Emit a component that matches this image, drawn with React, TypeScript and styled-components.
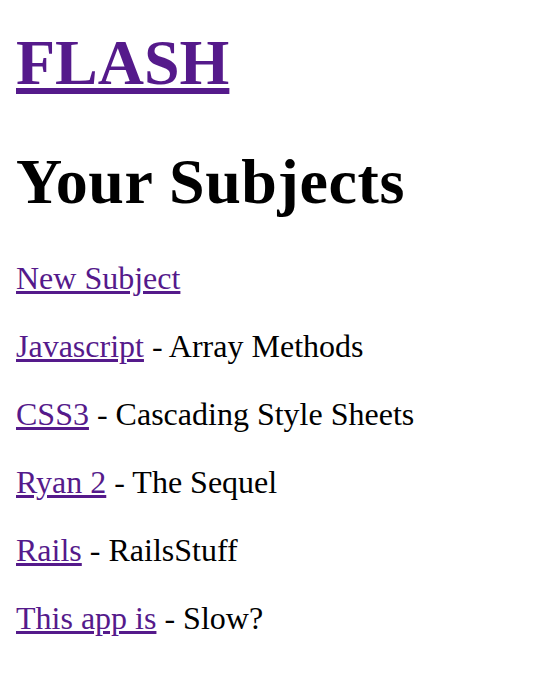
import React from "react";
import styled, { createGlobalStyle } from "styled-components";

const Global = createGlobalStyle`
  html, body { margin: 0; padding: 0; background: #fff; }
  body { font-family: "Liberation Serif", "Times New Roman", serif; color: #000; }
`;

const Page = styled.div`
  padding: 28px 16px 16px;
  font-size: 32px;
  line-height: 36px;
`;

const Brand = styled.h1`
  margin: 0;
  font-size: 64px;
  font-weight: bold;
  line-height: 1.107;
`;

const Heading = styled.h1`
  margin: 48px 0 42px;
  font-size: 64px;
  font-weight: bold;
  line-height: 1.107;
  letter-spacing: 0.6px;
`;

const Link = styled.a`
  color: #551a8b;
  text-decoration: underline;
  cursor: pointer;
`;

const Row = styled.p`
  margin: 32px 0;
  &:first-of-type { margin-top: 0; }
`;

const subjects = [
  { name: "Javascript", desc: "Array Methods" },
  { name: "CSS3", desc: "Cascading Style Sheets" },
  { name: "Ryan 2", desc: "The Sequel" },
  { name: "Rails", desc: "RailsStuff" },
  { name: "This app is", desc: "Slow?" },
];

export default function App() {
  return (
    <>
      <Global />
      <Page>
        <Brand>
          <Link href="#">FLASH</Link>
        </Brand>
        <Heading>Your Subjects</Heading>
        <Row>
          <Link href="#">New Subject</Link>
        </Row>
        {subjects.map((s) => (
          <Row key={s.name}>
            <Link href="#">{s.name}</Link> - {s.desc}
          </Row>
        ))}
      </Page>
    </>
  );
}
